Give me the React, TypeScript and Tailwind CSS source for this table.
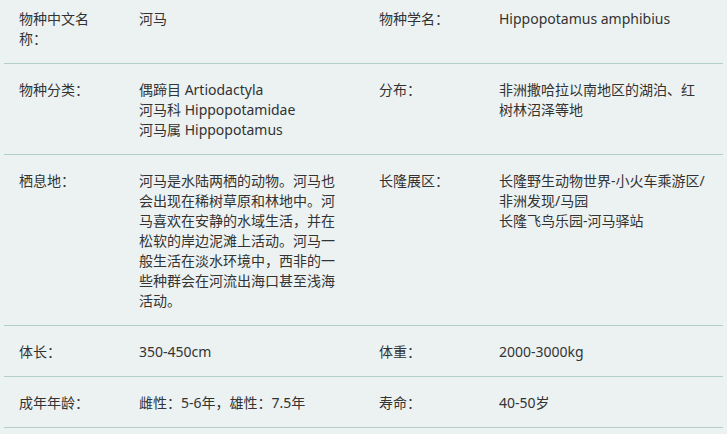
import React from "react";

type Row = { l1: string; v1: React.ReactNode; l2: string; v2: React.ReactNode; first?: boolean };

const rows: Row[] = [
  { l1: "物种中文名称：", v1: "河马", l2: "物种学名：", v2: "Hippopotamus amphibius", first: true },
  {
    l1: "物种分类：",
    v1: (
      <>
        偶蹄目 Artiodactyla
        <br />
        河马科 Hippopotamidae
        <br />
        河马属 Hippopotamus
      </>
    ),
    l2: "分布：",
    v2: "非洲撒哈拉以南地区的湖泊、红树林沼泽等地",
  },
  {
    l1: "栖息地：",
    v1: "河马是水陆两栖的动物。河马也会出现在稀树草原和林地中。河马喜欢在安静的水域生活，并在松软的岸边泥滩上活动。河马一般生活在淡水环境中，西非的一些种群会在河流出海口甚至浅海活动。",
    l2: "长隆展区：",
    v2: (
      <>
        长隆野生动物世界-小火车乘游区/非洲发现/马园
        <br />
        长隆飞鸟乐园-河马驿站
      </>
    ),
  },
  { l1: "体长：", v1: "350-450cm", l2: "体重：", v2: "2000-3000kg" },
  { l1: "成年年龄：", v1: "雌性：5-6年，雄性：7.5年", l2: "寿命：", v2: "40-50岁" },
];

export default function App() {
  return (
    <div
      className="w-[727px] h-[434px] overflow-hidden bg-[#ecf2f2] text-[#333333] text-[14px] leading-[20px]"
      style={{ fontFamily: '"Noto Sans", "Noto Sans CJK SC", sans-serif' }}
    >
      <div className="ml-[4px] w-[719px]">
        {rows.map((r, i) => (
          <div
            key={i}
            className={`grid grid-cols-[120px_240px_120px_239px] border-b border-[#b3d0c8] ${
              r.first ? "pt-[9px]" : "pt-[16px]"
            } pb-[14px]`}
          >
            <div className="pl-[15px] pr-[15px]">{r.l1}</div>
            <div className="pl-[15px] pr-[17px] break-all">{r.v1}</div>
            <div className="pl-[15px] pr-[15px]">{r.l2}</div>
            <div className="pl-[15px] pr-[16px] break-all">{r.v2}</div>
          </div>
        ))}
      </div>
    </div>
  );
}
